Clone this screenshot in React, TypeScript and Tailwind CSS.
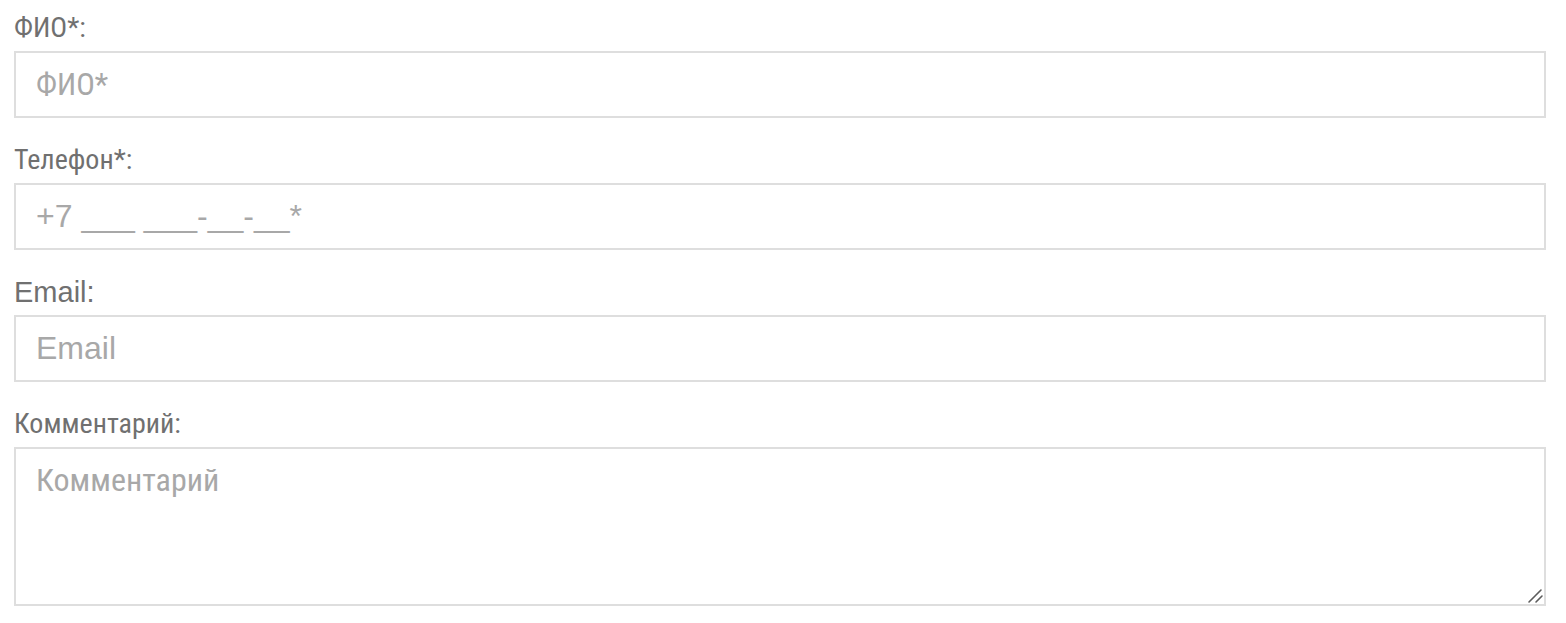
import type { ReactNode } from 'react'

const cyr = 'font-[Roboto,"Liberation_Sans",sans-serif] [font-stretch:87.5%]'
const lat = 'font-["Liberation_Sans",Arial,sans-serif]'

const fieldBox =
  'block w-full border-2 border-[#dedede] bg-white px-[20px] text-[#555] outline-none placeholder:text-[#a8a8a8]'

function Field({ label, latin, children }: { label: string; latin?: boolean; children: ReactNode }) {
  return (
    <div className="mb-[26px]">
      <label
        className={`flex h-[32px] items-center leading-none text-[#707070] ${latin ? `${lat} text-[29px]` : `${cyr} text-[28px]`}`}
      >
        {label}
      </label>
      <div className="relative mt-[7px]">{children}</div>
    </div>
  )
}

export default function App() {
  return (
    <div className="min-h-[623px] bg-white px-[14px] pt-[12px]">
      <form className="w-[1532px]">
        <Field label="ФИО*:">
          <input type="text" placeholder="ФИО*" className={`${fieldBox} ${cyr} h-[67px] text-[31px]`} />
        </Field>
        <Field label="Телефон*:">
          <input
            type="tel"
            placeholder="+7 ___ ___-__-__*"
            className={`${fieldBox} ${lat} h-[67px] text-[32px]`}
          />
        </Field>
        <Field label="Email:" latin>
          <input type="email" placeholder="Email" className={`${fieldBox} ${lat} h-[67px] text-[32px]`} />
        </Field>
        <Field label="Комментарий:">
          <textarea
            placeholder="Комментарий"
            className={`${fieldBox} ${cyr} h-[159px] resize-y pt-[13px] text-[32px] leading-[36px]`}
          />
          {/* grip drawn over the native one so it reads like the reference */}
          <svg
            className="pointer-events-none absolute right-[2px] bottom-[2px] h-[18px] w-[18px] bg-white"
            viewBox="0 0 18 18"
            aria-hidden
          >
            <path d="M3 16 L15 4 M10 16 L16 10" stroke="#5c5c5c" strokeWidth="1.6" strokeLinecap="round" />
          </svg>
        </Field>
      </form>
    </div>
  )
}
